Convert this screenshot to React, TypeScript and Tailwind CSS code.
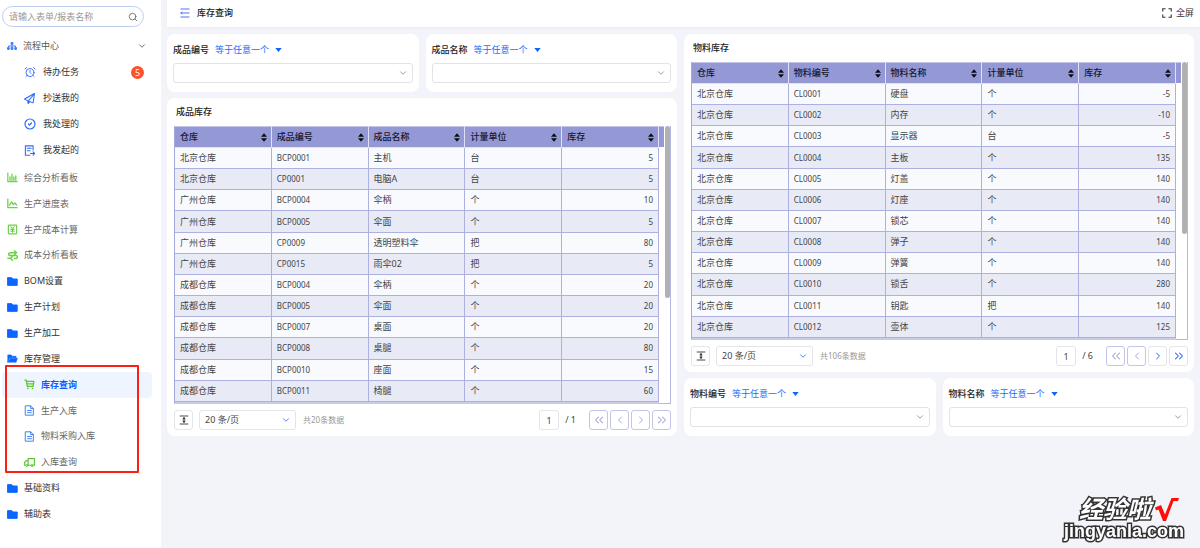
import type { ReactNode } from 'react';
import { useState } from 'react';
import { AlarmClock, ChevronDown, ChevronLeft, ChevronRight, ChevronsLeft, ChevronsRight, CircleCheck, Search } from 'lucide-react';
import { FaRegPaperPlane, FaSitemap } from 'react-icons/fa6';

type Row = [string, string, string, string, number];

const productRows: Row[] = [
  ['北京仓库', 'BCP0001', '主机', '台', 5],
  ['北京仓库', 'CP0001', '电脑A', '台', 5],
  ['广州仓库', 'BCP0004', '伞柄', '个', 10],
  ['广州仓库', 'BCP0005', '伞面', '个', 5],
  ['广州仓库', 'CP0009', '透明塑料伞', '把', 80],
  ['广州仓库', 'CP0015', '雨伞02', '把', 5],
  ['成都仓库', 'BCP0004', '伞柄', '个', 20],
  ['成都仓库', 'BCP0005', '伞面', '个', 20],
  ['成都仓库', 'BCP0007', '桌面', '个', 20],
  ['成都仓库', 'BCP0008', '桌腿', '个', 80],
  ['成都仓库', 'BCP0010', '座面', '个', 15],
  ['成都仓库', 'BCP0011', '椅腿', '个', 60],
];

const materialRows: Row[] = [
  ['北京仓库', 'CL0001', '硬盘', '个', -5],
  ['北京仓库', 'CL0002', '内存', '个', -10],
  ['北京仓库', 'CL0003', '显示器', '台', -5],
  ['北京仓库', 'CL0004', '主板', '个', 135],
  ['北京仓库', 'CL0005', '灯盖', '个', 140],
  ['北京仓库', 'CL0006', '灯座', '个', 140],
  ['北京仓库', 'CL0007', '锁芯', '个', 140],
  ['北京仓库', 'CL0008', '弹子', '个', 140],
  ['北京仓库', 'CL0009', '弹簧', '个', 140],
  ['北京仓库', 'CL0010', '锁舌', '个', 280],
  ['北京仓库', 'CL0011', '钥匙', '把', 140],
  ['北京仓库', 'CL0012', '壶体', '个', 125],
];

function Glyph({ children, className }: { children: ReactNode; className: string }) {
  return (
    <svg viewBox="0 0 20 20" aria-hidden="true" fill="none" stroke="currentColor" strokeWidth="1.8" strokeLinecap="round" strokeLinejoin="round" className={`size-[11px] shrink-0 ${className}`}>
      {children}
    </svg>
  );
}

const BarIcon = () => (
  <Glyph className="text-[#6fd14b]">
    <path d="M1.500 2v15.500h17" strokeWidth="2.200" />
    <path d="M5.500 9v6M9 4v11M12.500 9v6M16 7v8" strokeWidth="2.400" />
  </Glyph>
);
const LineIcon = () => (
  <Glyph className="text-[#6fd14b]">
    <path d="M1.500 2v15.500h17" strokeWidth="2.400" />
    <path d="M4.500 13l4-6 3 5 3-3 3 4" strokeWidth="2.400" />
  </Glyph>
);
const YenBookIcon = () => (
  <Glyph className="text-[#6fd14b]">
    <rect x="2.500" y="2" width="15" height="16" rx="1" strokeWidth="2.200" />
    <path d="M7 5l3 4 3-4M10 9v6M7 10h6M7 13h6" strokeWidth="2" />
  </Glyph>
);
const LoopIcon = () => (
  <Glyph className="text-[#6fd14b]">
    <path d="M13.500 1.500L17.500 5l-4 3.500M17.500 5H7M4.500 10h12a2.800 2.800 0 010 5.500H13M6 5.500A2.500 2.500 0 004 10M1.500 15h5M10 11.500l-3.500 3.700 3.500 3.300" strokeWidth="2.600" />
  </Glyph>
);
const FolderIcon = () => (
  <Glyph className="text-[#0a66ff]">
    <path d="M1.500 3h7l2 2.500h8v11.500h-17z" fill="currentColor" />
  </Glyph>
);
const FolderOpenIcon = () => (
  <Glyph className="text-[#0a66ff]">
    <path d="M1.500 16.500v-13h6l2 2.500h7v2.500h-12z" fill="currentColor" strokeWidth="1.200" />
    <path d="M5.500 9.500h13.500l-2.500 7.200h-14z" fill="currentColor" strokeWidth="1" />
  </Glyph>
);
const CartIcon = () => (
  <Glyph className="text-[#5fc437]">
    <path d="M1.500 2h2.500l2 11.500h10.500l1.500-9h-13M5.500 9h12" strokeWidth="2.300" />
    <path d="M7 17v.2M15.500 17v.2" strokeWidth="3" />
  </Glyph>
);
const FileIcon = () => (
  <Glyph className="text-[#3b83ff]">
    <path d="M3 1.500h9l5 5v12H3zM12 1.500v5h5M6.500 10h7M6.500 14h7" />
  </Glyph>
);
const TruckIcon = () => (
  <Glyph className="text-[#5fc437]">
    <path d="M7.500 15V3H19v12h-2M7.500 6.500H4L1.200 10v5H3M7.500 15h5" strokeWidth="2.200" />
    <circle cx="5.200" cy="15.500" r="1.900" />
    <circle cx="14.700" cy="15.500" r="1.900" />
  </Glyph>
);
const LaunchIcon = () => (
  <Glyph className="text-[#2f6bff]">
    <path d="M16.500 9V1.500h-14v17h8M6 6h7M6 10.500h5M12 15.500h7M16.500 12.500l3 3-3 3" strokeWidth="2" />
  </Glyph>
);
const RowHeightIcon = () => (
  <svg viewBox="0 0 20 20" aria-hidden="true" className="size-[10px]" fill="none" stroke="#333" strokeWidth="1.800">
    <path d="M1.500 2h17M1.500 18h17M10 5v10" />
    <path d="M6.500 8.500L10 4l3.500 4.500zM6.500 11.500L10 16l3.500-4.500z" fill="#333" stroke="none" />
  </svg>
);

type NavItem = { label: string; icon: ReactNode; dark?: boolean; sub?: boolean; active?: boolean };

const taskItems: { label: string; icon: ReactNode; count?: number }[] = [
  { label: '待办任务', icon: <AlarmClock className="size-[12px] text-[#3f74ff]" /> , count: 5 },
  { label: '抄送我的', icon: <FaRegPaperPlane className="size-[11px] text-[#2f6bff]" /> },
  { label: '我处理的', icon: <CircleCheck className="size-[12px] text-[#2f6bff]" strokeWidth={2.4} /> },
  { label: '我发起的', icon: <LaunchIcon /> },
];

const navItems: NavItem[] = [
  { label: '综合分析看板', icon: <BarIcon /> },
  { label: '生产进度表', icon: <LineIcon /> },
  { label: '生产成本计算', icon: <YenBookIcon /> },
  { label: '成本分析看板', icon: <LoopIcon /> },
  { label: 'BOM设置', icon: <FolderIcon />, dark: true },
  { label: '生产计划', icon: <FolderIcon />, dark: true },
  { label: '生产加工', icon: <FolderIcon />, dark: true },
  { label: '库存管理', icon: <FolderOpenIcon />, dark: true },
  { label: '库存查询', icon: <CartIcon />, sub: true, active: true },
  { label: '生产入库', icon: <FileIcon />, sub: true },
  { label: '物料采购入库', icon: <FileIcon />, sub: true },
  { label: '入库查询', icon: <TruckIcon />, sub: true },
  { label: '基础资料', icon: <FolderIcon />, dark: true },
  { label: '辅助表', icon: <FolderIcon />, dark: true },
];

function navClass(item: NavItem) {
  const base = 'flex h-full items-center rounded-sm ';
  if (item.active) return base + 'gap-[6px] bg-[#eef5ff] pl-[22px] font-bold text-[#0a5cff]';
  if (item.sub) return base + 'gap-[6px] pl-[22px] text-[#666]';
  return base + (item.dark ? 'gap-[6px] pl-[5px] text-[#333]' : 'gap-[6px] pl-[5px] text-[#666]');
}

function Sidebar() {
  return (
    <aside className="w-[161px] shrink-0 bg-white pt-[6px] pl-[2px]">
      <label className="flex h-[21px] w-[142px] items-center rounded-full border border-[#bdcfee] pr-[5px] pl-[6px]">
        <input type="search" aria-label="搜索表单或报表" placeholder="请输入表单/报表名称" className="w-full min-w-0 bg-transparent outline-none placeholder:text-[#999]" />
        <Search className="size-[10px] shrink-0 text-[#666]" />
      </label>
      <nav aria-label="流程" className="mt-[6px]">
        <button type="button" className="flex h-[26px] w-[145px] items-center gap-[6px] pl-[5px] text-[#555]">
          <FaSitemap className="size-[10px] text-[#3f7dff]" />
          流程中心
          <ChevronDown className="ml-auto size-[10px]" />
        </button>
        <ul>
          {taskItems.map((t) => (
            <li key={t.label}>
              <a href="#" className="flex h-[26px] w-[142px] items-center pl-[22px] text-[#333]">
                <span className="flex w-[19px] items-center">{t.icon}</span>
                {t.label}
                {t.count && (
                  <span className="ml-auto flex size-[13px] items-center justify-center rounded-full bg-[#ff4f2b] text-[9px] leading-none text-white">{t.count}</span>
                )}
              </a>
            </li>
          ))}
        </ul>
      </nav>
      <nav aria-label="菜单" className="relative mt-[2px] w-[150px]">
        <ul className="grid h-[362px] auto-rows-fr">
          {navItems.map((item) => (
            <li key={item.label}>
              <a href="#" className={navClass(item)}>
                {item.icon}
                {item.label}
              </a>
            </li>
          ))}
        </ul>
        <div className="pointer-events-none absolute top-[200px] left-[3px] h-[108px] w-[134px] rounded-[1px] border-2 border-[#fb2016]" />
      </nav>
    </aside>
  );
}

function FilterCard({ label }: { label: string }) {
  return (
    <section className="min-w-0 flex-1 rounded-lg bg-white px-[6px] pt-[9px] pb-[9px]">
      <div className="mb-[6px] flex h-[14px] items-center gap-[6px]">
        <label htmlFor={label} className="font-medium text-[#222]">{label}</label>
        <button type="button" className="flex items-center gap-[6px] text-[#1a6dff]">
          等于任意一个
          <svg viewBox="0 0 8 5" aria-hidden="true" className="h-[4px] w-[7px]"><path d="M0 0h8L4 5z" fill="#0a66ff" /></svg>
        </button>
      </div>
      <div className="relative">
        <select id={label} className="block h-[20px] w-full appearance-none rounded-[3px] border border-[#e2e3e6] bg-white px-2 outline-none">
          <option value="" />
        </select>
        <ChevronDown className="pointer-events-none absolute top-[5px] right-[5px] size-[10px] text-[#888]" />
      </div>
    </section>
  );
}

function PageButton({ label, disabled, children }: { label: string; disabled?: boolean; children: ReactNode }) {
  return (
    <button
      type="button"
      aria-label={label}
      disabled={disabled}
      className={
        disabled
          ? 'flex h-[20px] w-[19px] items-center justify-center rounded-[3px] border border-[#c2c4ea] text-[#a3a7dc]'
          : 'flex h-[20px] w-[19px] items-center justify-center rounded-[3px] border border-[#e4e5e9] text-[#2f67ff]'
      }
    >
      {children}
    </button>
  );
}

function StockCard({ title, prefix, rows, total, pages }: { title: string; prefix: string; rows: Row[]; total: number; pages: number }) {
  const [page, setPage] = useState('1');
  const heads = ['仓库', prefix + '编号', prefix + '名称', '计量单位', '库存'];
  const last = pages === 1;
  return (
    <section className="rounded-lg bg-white pr-[6px] pb-[6px] pl-[7px]">
      <h2 className="flex h-[28px] items-center pl-[2px] font-medium text-[#222]">{title}</h2>
      <div className="flex">
        <div className="min-w-0 flex-1">
          <table className="h-[278px] w-full table-fixed border-separate border-spacing-0 border-b-2 border-l border-b-[#c9cbea] border-l-[#a5a8dc]">
            <thead>
              <tr>
                {heads.map((h) => (
                  <th key={h} className="h-[22px] border-t border-r border-b border-t-[#c5c7ea] border-r-[#dfe0f5] border-b-[#dfe0f5] bg-[#9498d5] p-0 pr-[4px] pl-[5px] text-left font-medium text-[#16162e]">
                    <button type="button" className="flex w-full items-center justify-between">
                      {h}
                      <svg viewBox="0 0 7 10" aria-hidden="true" className="h-[9px] w-[6px]"><path d="M0 4L3.500 0 7 4zM0 6h7L3.500 10z" fill="#0c0c18" /></svg>
                    </button>
                  </th>
                ))}
              </tr>
            </thead>
            <tbody>
              {rows.map((r, i) => (
                <tr key={i} className="bg-[#f9fafe] even:bg-[#e8eaf6]">
                  {r.map((c, j) => (
                    <td
                      key={j}
                      className={
                        j === 4
                          ? 'border-r border-b border-[#aeb0e0] p-0 pr-[5px] text-right text-[8px] text-[#444]'
                          : j === 1
                            ? 'border-r border-b border-[#aeb0e0] p-0 pl-[5px] text-[8px] text-[#444]'
                            : 'border-r border-b border-[#aeb0e0] p-0 pl-[5px] text-[#444]'
                      }
                    >
                      {c}
                    </td>
                  ))}
                </tr>
              ))}
            </tbody>
          </table>
        </div>
        <div aria-hidden="true" className="flex w-[12px] shrink-0 justify-between border-r border-b border-[#b4b6e3]">
          <span className="h-[21px] w-[5px] border-t border-t-[#c5c7ea] bg-[#9498d5]" />
          <span className="h-[172px] w-[5px] rounded-full bg-[#b1b1b1]" />
        </div>
      </div>
      <div className="mt-[6px] flex h-[20px] items-center text-[#444]">
        <button type="button" aria-label="行高" className="flex h-[20px] w-[19px] items-center justify-center rounded-[3px] border border-[#e4e5e9]">
          <RowHeightIcon />
        </button>
        <div className="relative ml-[6px]">
          <select aria-label="每页条数" className="block h-[20px] w-[97px] appearance-none rounded-[3px] border border-[#e4e5e9] bg-white pl-[5px] outline-none">
            <option>20 条/页</option>
          </select>
          <ChevronDown className="pointer-events-none absolute top-[5px] right-[5px] size-[10px] text-[#2f67ff]" />
        </div>
        <span className="ml-[7px] text-[8px] text-[#999]">共{total}条数据</span>
        <input aria-label="页码" value={page} onChange={(e) => setPage(e.target.value)} className="ml-auto h-[20px] w-[20px] rounded-[3px] border border-[#e4e5e9] text-center outline-none" />
        <span className="mr-[13px] ml-[6px]">/ {pages}</span>
        <div className="flex gap-[2px]">
          <PageButton label="第一页" disabled><ChevronsLeft className="size-[14px]" strokeWidth={1.8} /></PageButton>
          <PageButton label="上一页" disabled><ChevronLeft className="size-[12px]" /></PageButton>
          <PageButton label="下一页" disabled={last}><ChevronRight className="size-[12px]" /></PageButton>
          <PageButton label="最后一页" disabled={last}><ChevronsRight className="size-[14px]" strokeWidth={1.8} /></PageButton>
        </div>
      </div>
    </section>
  );
}

function Watermark() {
  return (
    <div className="pointer-events-none fixed right-[16px] bottom-[7px] font-['Liberation_Sans','Noto_Sans_CJK_SC',sans-serif] font-bold text-white [-webkit-text-stroke:3px_#333] [paint-order:stroke_fill]">
      <div className="flex h-[25px] items-center justify-end gap-[4px] pr-[5px]">
        <span className="text-[24px] leading-[25px] italic">经验啦</span>
        <svg viewBox="0 0 24 24" aria-hidden="true" className="size-[24px]" fill="#ff0d0d"><path d="M0 9.500L6 7l4 9.500L16.500 0H24l-1 3h-4.500L11 23H8L3.500 11.500 1 12.500z" /></svg>
      </div>
      <div className="text-right text-[18px] leading-[19px]">jingyanla.com</div>
    </div>
  );
}

export default function App() {
  return (
    <div className="flex min-h-screen bg-[#f3f4f9] font-['Noto_Sans','Noto_Sans_CJK_SC',sans-serif] text-[9px] leading-[14px]">
      <Sidebar />
      <div className="min-w-0 flex-1 pl-[6px]">
        <header className="flex h-[27px] items-center bg-white pr-[6px] pb-[2px] pl-[13px] text-[#222] shadow-[0_1px_2px_#e9eaef]">
          <button type="button" aria-label="收起菜单" className="mr-[7px]">
            <svg viewBox="0 0 20 20" aria-hidden="true" className="size-[10px]" fill="none" stroke="#5271ff" strokeWidth="2"><path d="M1 2h18M6 10h13M1 18h18" /><path d="M0 10l5-3.500v7z" fill="#5271ff" stroke="none" /></svg>
          </button>
          <h1 className="font-medium">库存查询</h1>
          <button type="button" className="ml-auto flex items-center gap-[4px] text-[#333]">
            <svg viewBox="0 0 20 20" aria-hidden="true" className="size-[10px]" fill="none" stroke="#333" strokeWidth="2.200"><path d="M1.500 7V1.500H7M13 1.500h5.500V7M18.500 13v5.500H13M7 18.500H1.500V13" /></svg>
            全屏
          </button>
        </header>
        <main className="grid grid-cols-2 items-start gap-[7px] pt-[7px] pr-[6px]">
          <div className="flex flex-col gap-[6px]">
            <div className="flex gap-[7px]">
              <FilterCard label="成品编号" />
              <FilterCard label="成品名称" />
            </div>
            <StockCard title="成品库存" prefix="成品" rows={productRows} total={20} pages={1} />
          </div>
          <div className="flex flex-col gap-[6px]">
            <StockCard title="物料库存" prefix="物料" rows={materialRows} total={106} pages={6} />
            <div className="flex gap-[7px]">
              <FilterCard label="物料编号" />
              <FilterCard label="物料名称" />
            </div>
          </div>
        </main>
      </div>
      <Watermark />
    </div>
  );
}
